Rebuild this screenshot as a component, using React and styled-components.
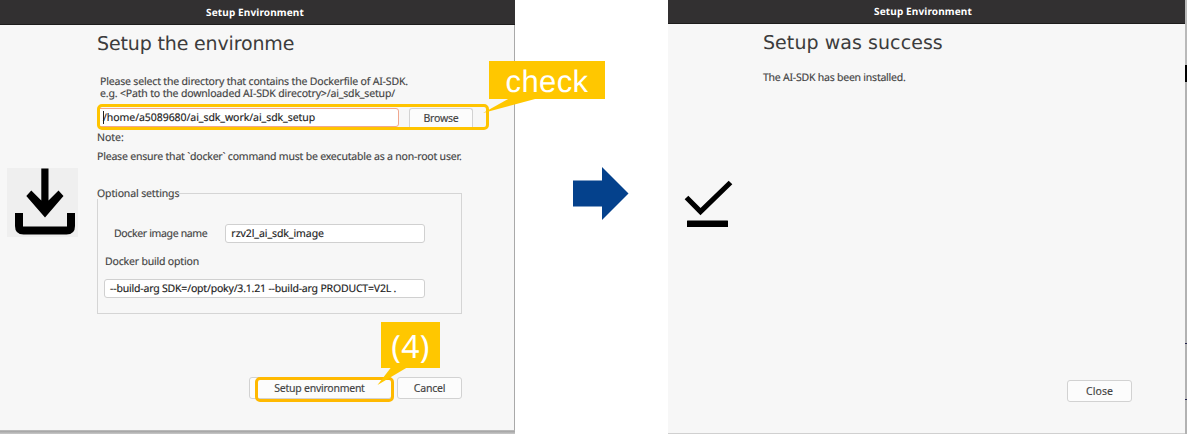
import React from "react";
import styled, { createGlobalStyle } from "styled-components";

const GlobalStyle = createGlobalStyle`
  * { box-sizing: border-box; }
  body {
    margin: 0;
    overflow: hidden;
    background: #fff;
    color: #434343;
    font-family: "Noto Sans", "Open Sans", sans-serif;
    font-size: 10.5px;
    text-rendering: geometricPrecision;
  }
`;

const Stage = styled.main`
  display: flex;
  align-items: flex-start;
  width: 1187px;
  height: 434px;
  overflow: hidden;
`;

const Window = styled.section`
  position: relative;
  display: flex;
  flex-direction: column;
  flex: none;
  width: ${(p) => p.$width}px;
  height: ${(p) => p.$height}px;
  background: #f7f7f7;
  border-right: ${(p) => p.$edge}px solid #a9a9a9;
  border-bottom: 1px solid ${(p) => p.$bottom};
`;

const LeftPane = styled.div`
  position: relative;
  flex: none;
  width: 515px;
`;

const WindowShadow = styled.div`
  height: 3px;
  width: 515px;
  background: linear-gradient(#a2a2a2, #c9c9c9);
`;

const TitleBar = styled.header`
  display: flex;
  flex: none;
  justify-content: center;
  height: ${(p) => p.$height}px;
  padding: ${(p) => p.$top}px ${(p) => p.$shift}px 0 0;
  margin-right: ${(p) => (p.$bleed ? -1 : 0)}px;
  background: #323031;
  border-bottom: 1px solid #1d1c1c;
  color: #fff;
  font-size: 10px;
  font-weight: 700;
  line-height: 14px;
  letter-spacing: 0.13px;
`;

const Body = styled.div`
  display: flex;
  flex: 1;
  min-height: 0;
`;

const IconColumn = styled.div`
  flex: none;
  width: ${(p) => p.$width}px;
  padding: ${(p) => p.$pad};
  svg { display: block; }
`;

const Content = styled.div`
  display: flex;
  flex-direction: column;
  flex: none;
  width: ${(p) => p.$width}px;
  -webkit-text-stroke: 0.15px currentColor;
`;

const Heading = styled.h1`
  margin: ${(p) => p.$top}px 0 0;
  height: 24px;
  color: #3c3c3c;
  font: 400 19px/24px "DejaVu Sans", sans-serif;
  letter-spacing: ${(p) => p.$track || 0}px;
  white-space: nowrap;
  -webkit-text-stroke: 0;
`;

const Text = styled.p`
  margin: ${(p) => p.$margin || "0"};
  height: 12px;
  line-height: 12px;
  letter-spacing: ${(p) => p.$track || 0}px;
  white-space: pre;
`;

const Row = styled.div`
  display: flex;
  align-items: flex-start;
  flex: none;
  gap: ${(p) => p.$gap}px;
  margin: ${(p) => p.$margin || "0"};
`;

const Field = styled.div`
  flex: none;
  width: ${(p) => p.$width}px;
  height: 19px;
  padding-left: 5px;
  border: 1px solid ${(p) => (p.$focus ? "#f0a78f" : "#d0d0d0")};
  border-radius: 3px;
  background: #fff;
  color: #1c1c1c;
  line-height: 19px;
  letter-spacing: ${(p) => p.$track}px;
  white-space: pre;
`;

const Caret = styled.span`
  display: inline-block;
  width: 1px;
  height: 13px;
  margin: -2px -1px 0 0;
  background: #222;
  vertical-align: middle;
`;

const Button = styled.button`
  flex: none;
  width: ${(p) => p.$width}px;
  height: 22px;
  padding: 0 ${(p) => p.$shift || 0}px 0 0;
  border: 1px solid #d2d2d2;
  border-radius: 3px;
  background: #fcfcfc;
  color: #434343;
  font: inherit;
  line-height: 19px;
  letter-spacing: ${(p) => p.$track}px;
`;

const BrowseButton = styled(Button)`
  height: 20px;
  border-bottom: 0;
  border-radius: 3px 3px 0 0;
  line-height: 19px;
`;

const Group = styled.fieldset`
  display: flex;
  flex-direction: column;
  flex: none;
  width: 365px;
  height: 127px;
  min-width: 0;
  margin: 24px 0 0;
  padding: 0 0 0 7px;
  border: 1px solid #d5d5d5;
`;

const Legend = styled.legend`
  height: 12px;
  margin-left: -8px;
  padding: 0;
  background: #f7f7f7;
  line-height: 14px;
  letter-spacing: -0.13px;
`;

const Highlight = styled.div`
  position: absolute;
  left: ${(p) => p.$x}px;
  top: ${(p) => p.$y}px;
  width: ${(p) => p.$w}px;
  height: ${(p) => p.$h}px;
  border: 3px solid ${(p) => p.$color};
  border-radius: 5px;
`;

const Callout = styled.div`
  position: absolute;
  left: ${(p) => p.$x}px;
  top: ${(p) => p.$y}px;
  width: ${(p) => p.$w}px;
  height: ${(p) => p.$h}px;
  background: #ffc700;
  color: #fff;
  font: ${(p) => p.$font};
  letter-spacing: 0.4px;
  text-align: center;
  white-space: nowrap;
`;

const Tail = styled.svg`
  position: absolute;
  left: -6px;
  top: 100%;
  overflow: visible;
`;

const ArrowGap = styled.div`
  flex: none;
  width: 153px;
  padding: 167px 0 0 58px;
  svg { display: block; }
`;

const ScreenEdge = styled.div`
  flex: 1;
  height: 434px;
  background: linear-gradient(
    #b9b9b9 65px, #000 65px 82px, #b2b2b2 82px 343px, #23234d 343px 344px,
    #b2b2b2 344px 399px, #23234d 399px 400px, #b2b2b2 400px
  );
`;

const DownloadIcon = () => (
  <svg width="71" height="69" viewBox="0 0 71 69">
    <rect width="71" height="69" fill="#efefef" />
    <path
      d="M34.300 0.500H41.500V32.500L51.500 22.500L56.500 28L38 49.500L19.300 28L24.300 22.500L34.300 32.500Z"
      fill="#000"
    />
    <path d="M8 45V58Q8 66.500 16.500 66.500H59.500Q68 66.500 68 58V45H60V58.500H16V45Z" fill="#000" />
  </svg>
);

const DoneIcon = () => (
  <svg width="49" height="48" viewBox="0 0 49 48">
    <path d="M2.500 17.500L16.500 31.500L46.500 2.500" fill="none" stroke="#000" strokeWidth="5.200" />
    <rect x="3" y="40.500" width="41" height="6.500" rx="0.500" fill="#000" />
  </svg>
);

export default function App() {
  return (
    <>
      <GlobalStyle />
      <Stage>
        <LeftPane>
          <Window $width={515} $height={431} $edge={1} $bottom="#b9b9b9">
            <TitleBar $height={25} $top={5} $shift={5} $bleed>Setup Environment</TitleBar>
            <Body>
              <IconColumn $width={97} $pad="143px 0 0 7px">
                <DownloadIcon />
              </IconColumn>
              <Content $width={365}>
                <Heading $top={7} $track={-0.15}>Setup the environme</Heading>
                <Text $margin="20px 0 0 3px" $track={-0.17}>
                  Please select the directory that contains the Dockerfile of AI-SDK.
                </Text>
                <Text $margin="0 0 0 3px" $track={-0.16}>
                  {"e.g. <Path to the downloaded AI-SDK direcotry>/ai_sdk_setup/"}
                </Text>
                <Row $gap={10} $margin="8px -12px 0 0">
                  <Field $width={302} $focus $track={-0.06}>
                    <Caret />/home/a5089680/ai_sdk_work/ai_sdk_setup
                  </Field>
                  <BrowseButton $width={64} $track={-0.2}>Browse</BrowseButton>
                </Row>
                <Text $margin="4px 0 0">Note:</Text>
                <Text $margin="7px 0 0" $track={-0.197}>
                  Please ensure that `docker` command must be executable as a non-root user.
                </Text>
                <Group>
                  <Legend>Optional settings</Legend>
                  <Row $gap={18} $margin="25px 0 0 9px">
                    <Text $margin="4px 0 0" $track={-0.35}>Docker image name</Text>
                    <Field $width={200} $track={-0.07}>rzv2l_ai_sdk_image</Field>
                  </Row>
                  <Text $margin="13px 0 0" $track={-0.18}>Docker build option</Text>
                  <Row $margin="11px 0 0 -1px">
                    <Field $width={321} $track={-0.19}>
                      --build-arg SDK=/opt/poky/3.1.21 --build-arg PRODUCT=V2L .
                    </Field>
                  </Row>
                </Group>
                <Row $gap={5} $margin="63px 0 0 152px">
                  <Button $width={143} $shift={2} $track={-0.25}>Setup environment</Button>
                  <Button $width={65} $track={-0.2}>Cancel</Button>
                </Row>
              </Content>
            </Body>
          </Window>
          <WindowShadow />
          <Highlight $x={97} $y={104} $w={392} $h={26} $color="#ffc400" />
          <Highlight $x={255} $y={377} $w={139} $h={25} $color="#ffb900" />
          <Callout $x={489} $y={61} $w={116} $h={38} $font='400 31px/41px "Liberation Sans", sans-serif'>
            check
            <Tail width="60" height="15">
              <path d="M26 -0.500L0 14L54 -0.500Z" fill="#ffc700" />
            </Tail>
          </Callout>
          <Callout $x={381} $y={322} $w={59} $h={46} $font='400 32px/49px "Noto Sans", sans-serif'>
            (4)
            <Tail width="40" height="18">
              <path d="M16 -0.500L2.500 17L32 -0.500Z" fill="#ffc700" />
            </Tail>
          </Callout>
        </LeftPane>
        <ArrowGap>
          <svg width="56" height="54" viewBox="0 0 56 54">
            <path d="M0 13.500H29V0L55.500 26.500L29 53V39.500H0Z" fill="#04418c" />
          </svg>
        </ArrowGap>
        <Window $width={517} $height={434} $edge={0} $bottom="#d0d0d0">
          <TitleBar $height={24} $top={4} $shift={7}>Setup Environment</TitleBar>
          <Body>
            <IconColumn $width={95} $pad="156px 0 0 16px">
              <DoneIcon />
            </IconColumn>
            <Content $width={370}>
              <Heading $top={7} $track={0.06}>Setup was success</Heading>
              <Text $margin="17px 0 0" $track={-0.23}>The AI-SDK has been installed.</Text>
              <Row $margin="296px 0 0 304px">
                <Button $width={65} $track={0.05}>Close</Button>
              </Row>
            </Content>
          </Body>
        </Window>
        <ScreenEdge />
      </Stage>
    </>
  );
}
